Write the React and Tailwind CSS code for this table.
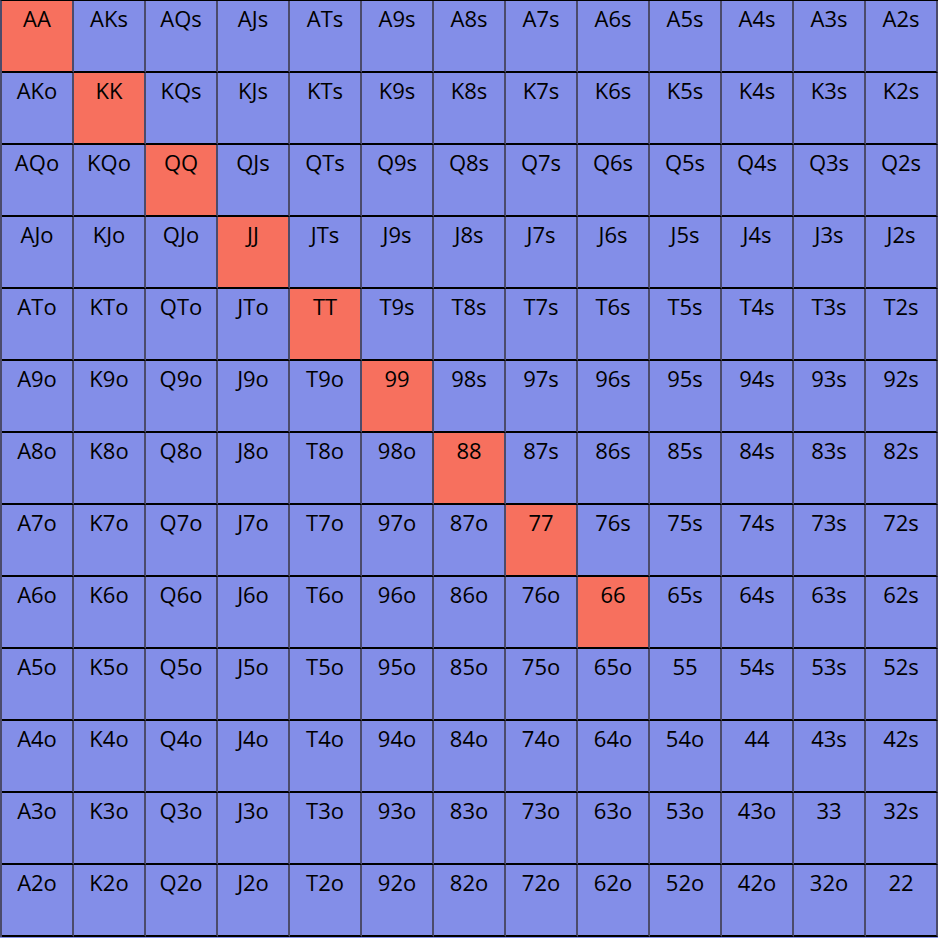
import React from "react";

const RANKS = ["A", "K", "Q", "J", "T", "9", "8", "7", "6", "5", "4", "3", "2"];

const handName = (r, c) => {
  if (r === c) return RANKS[r] + RANKS[c];
  if (c > r) return RANKS[r] + RANKS[c] + "s";
  return RANKS[c] + RANKS[r] + "o";
};

export default function App() {
  return (
    <div className="w-[938px] h-[938px] bg-[#838ee8] overflow-hidden">
      <div className="grid grid-cols-[repeat(13,72px)] border-l-2 border-t border-l-[#4b4b6b] border-t-black">
        {RANKS.map((_, r) =>
          RANKS.map((_, c) => (
            <div
              key={r + "-" + c}
              className={
                "h-[72px] pt-[3px] border-r-2 border-b-2 border-r-[#4b4b6b] border-b-black text-center text-[22px] leading-[1.36] text-black font-['Open_Sans',sans-serif] " +
                (r === c && r <= 8 ? "bg-[#f7705e]" : "bg-[#838ee8]")
              }
            >
              {handName(r, c)}
            </div>
          ))
        )}
      </div>
    </div>
  );
}
